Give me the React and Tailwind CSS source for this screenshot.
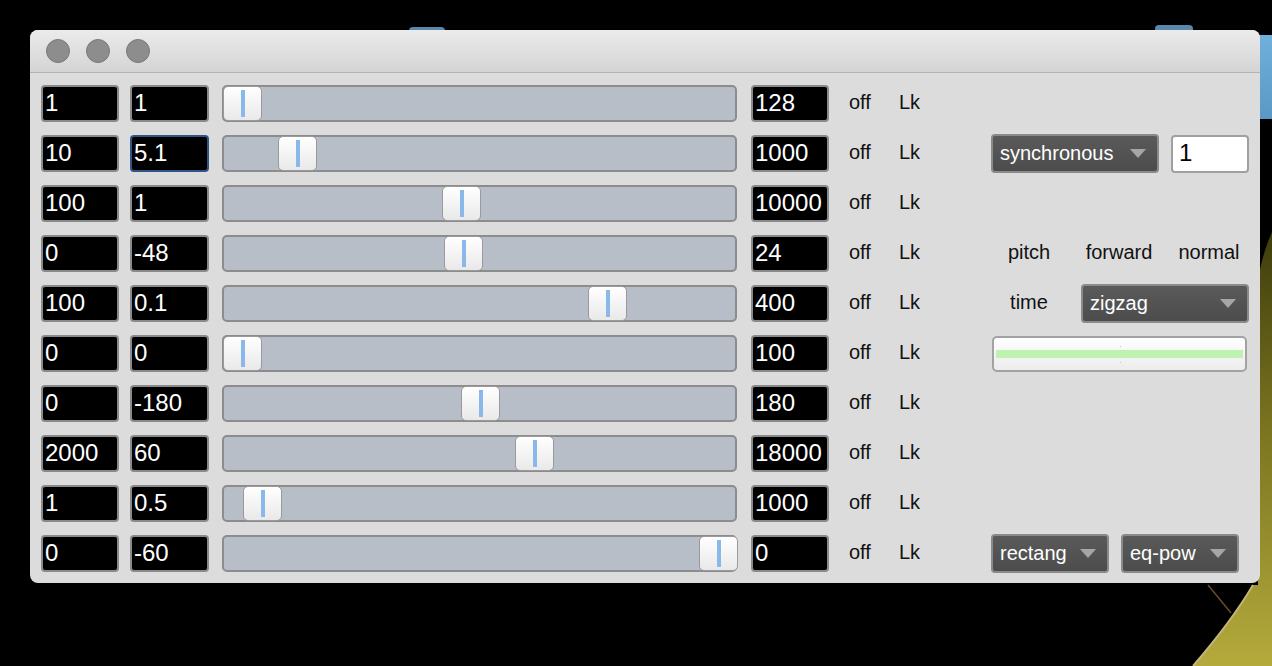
import React from "react";

const rows = [
  { a: "1", b: "1", c: "128", t: 0 },
  { a: "10", b: "5.1", c: "1000", t: 55, focus: true },
  { a: "100", b: "1", c: "10000", t: 219 },
  { a: "0", b: "-48", c: "24", t: 221 },
  { a: "100", b: "0.1", c: "400", t: 365 },
  { a: "0", b: "0", c: "100", t: 0 },
  { a: "0", b: "-180", c: "180", t: 238 },
  { a: "2000", b: "60", c: "18000", t: 292 },
  { a: "1", b: "0.5", c: "1000", t: 20 },
  { a: "0", b: "-60", c: "0", t: 476 },
];

function NumBox({ value, focus, w = "w-[78px]" }) {
  return (
    <div
      className={`${w} h-[37px] shrink-0 rounded-[4px] border-2 ${
        focus ? "border-[#2f5587]" : "border-[#8a8a8a]"
      } bg-black text-white text-[24px] leading-none flex items-center pl-[2px] pb-[1px] overflow-hidden whitespace-nowrap`}
    >
      {value}
    </div>
  );
}

function Slider({ t }) {
  return (
    <div className="relative w-[515px] h-[37px] shrink-0 rounded-[5px] border-2 border-[#8c8c8c] bg-[#b8bec8]">
      <div
        className="absolute top-[-1px] bottom-[-1px] w-[39px] rounded-[5px] border-[1.5px] border-[#9a9a9a] bg-gradient-to-b from-white to-[#e9e9e9] flex justify-center py-[3px]"
        style={{ left: t - 1 }}
      >
        <div className="w-[4px] h-full bg-[#8ab8ea]" />
      </div>
    </div>
  );
}

function Dropdown({ label, w }) {
  return (
    <div
      className={`${w} h-[39px] shrink-0 rounded-[4px] border-2 border-[#8a8a8a] bg-gradient-to-b from-[#5a5a5a] to-[#4c4c4c] text-white text-[20px] leading-none flex items-center justify-between pl-[7px] pr-[11px] pb-[2px] overflow-hidden whitespace-nowrap`}
    >
      <span>{label}</span>
      <svg width="16" height="9" viewBox="0 0 16 9" className="shrink-0 mt-[2px]">
        <polygon points="0,0 16,0 8,9" fill="#a6a6a6" />
      </svg>
    </div>
  );
}

function RightPanel({ i }) {
  if (i === 1)
    return (
      <div className="flex items-center gap-[12px] pl-[7px]">
        <Dropdown label="synchronous" w="w-[168px]" />
        <div className="w-[78px] h-[38px] rounded-[4px] border-2 border-[#a0a0a0] bg-white text-black text-[24px] leading-none flex items-center pl-[6px] pb-[1px]">
          1
        </div>
      </div>
    );
  if (i === 3)
    return (
      <div className="flex items-center text-[20px] text-[#111] -mt-[3px]">
        <div className="w-[90px] text-center">pitch</div>
        <div className="w-[90px] text-center">forward</div>
        <div className="w-[90px] text-center">normal</div>
      </div>
    );
  if (i === 4)
    return (
      <div className="flex items-center text-[20px] text-[#111]">
        <div className="w-[90px] text-center -mt-[3px]">time</div>
        <div className="pl-[7px]">
          <Dropdown label="zigzag" w="w-[168px]" />
        </div>
      </div>
    );
  if (i === 5)
    return (
      <div className="pl-[8px] flex items-center">
        <div className="relative w-[255px] h-[36px] rounded-[5px] border-2 border-[#a2a2a2] bg-gradient-to-b from-white to-[#ececec] flex items-center px-[2px]">
          <div className="w-full h-[8px] bg-[#bdf2b0]" />
          <div className="absolute left-[126px] top-[8px] w-[1px] h-[1px] bg-[#9be58a]" />
          <div className="absolute left-[126px] bottom-[7px] w-[1px] h-[1px] bg-[#9be58a]" />
        </div>
      </div>
    );
  if (i === 9)
    return (
      <div className="flex items-center gap-[12px] pl-[7px]">
        <Dropdown label="rectang" w="w-[118px]" />
        <Dropdown label="eq-pow" w="w-[118px]" />
      </div>
    );
  return null;
}

export default function App() {
  return (
    <div className="relative w-[1272px] h-[666px] bg-black overflow-hidden font-['Liberation_Sans',Arial,sans-serif]">
      {/* background desktop items */}
      <div className="absolute left-[409px] top-[27px] w-[36px] h-[10px] rounded-t-[4px] bg-[#5b87aa]" />
      <div className="absolute left-[1155px] top-[25px] w-[38px] h-[12px] rounded-t-[4px] bg-[#5b87aa]" />
      <div className="absolute left-[1250px] top-[35px] w-[30px] h-[84px] rounded-[4px] bg-gradient-to-b from-[#6fb0dc] to-[#5a98c6]" />
      <svg className="absolute left-0 top-0" width="1272" height="666" viewBox="0 0 1272 666">
        <defs>
          <linearGradient id="olive" x1="0" y1="0" x2="0" y2="1">
            <stop offset="0" stopColor="#3e3c0c" />
            <stop offset="0.45" stopColor="#7a7420" />
            <stop offset="1" stopColor="#b4aa3c" />
          </linearGradient>
        </defs>
        <path
          d="M1272 232 C1266 245 1261 262 1258 280 L1258 585 L1253 585 C1236 614 1212 644 1193 666 L1272 666 Z"
          fill="url(#olive)"
        />
        <path d="M1253 585 C1236 614 1212 644 1193 666" stroke="#c2b47a" strokeWidth="2" fill="none" />
        <path d="M1208 585 L1231 613" stroke="#6a4a2a" strokeWidth="1.5" />
      </svg>

      {/* window */}
      <div className="absolute left-[30px] top-[30px] w-[1230px] h-[553px] rounded-[8px] bg-[#dcdcdc] overflow-hidden flex flex-col">
        <div className="h-[43px] shrink-0 bg-gradient-to-b from-[#ebebeb] to-[#d4d4d4] border-b border-[#b3b3b3] flex items-center gap-[16px] pl-[16px]">
          <div className="w-[24px] h-[24px] rounded-full bg-[#8d8d8d] border border-[#7a7a7a]" />
          <div className="w-[24px] h-[24px] rounded-full bg-[#8d8d8d] border border-[#7a7a7a]" />
          <div className="w-[24px] h-[24px] rounded-full bg-[#8d8d8d] border border-[#7a7a7a]" />
        </div>
        <div className="flex flex-col gap-[13px] pt-[12px] pl-[11px]">
          {rows.map((r, i) => (
            <div key={i} className="flex items-center h-[37px]">
              <NumBox value={r.a} />
              <div className="w-[11px]" />
              <NumBox value={r.b} focus={r.focus} w="w-[79px]" />
              <div className="w-[13px]" />
              <Slider t={r.t} />
              <div className="w-[14px]" />
              <NumBox value={r.c} />
              <div className="w-[20px] shrink-0" />
              <div className="w-[50px] shrink-0 text-[20px] text-[#111] -mt-[3px]">off</div>
              <div className="w-[85px] shrink-0 text-[20px] text-[#111] -mt-[3px]">Lk</div>
              <RightPanel i={i} />
            </div>
          ))}
        </div>
      </div>
    </div>
  );
}
